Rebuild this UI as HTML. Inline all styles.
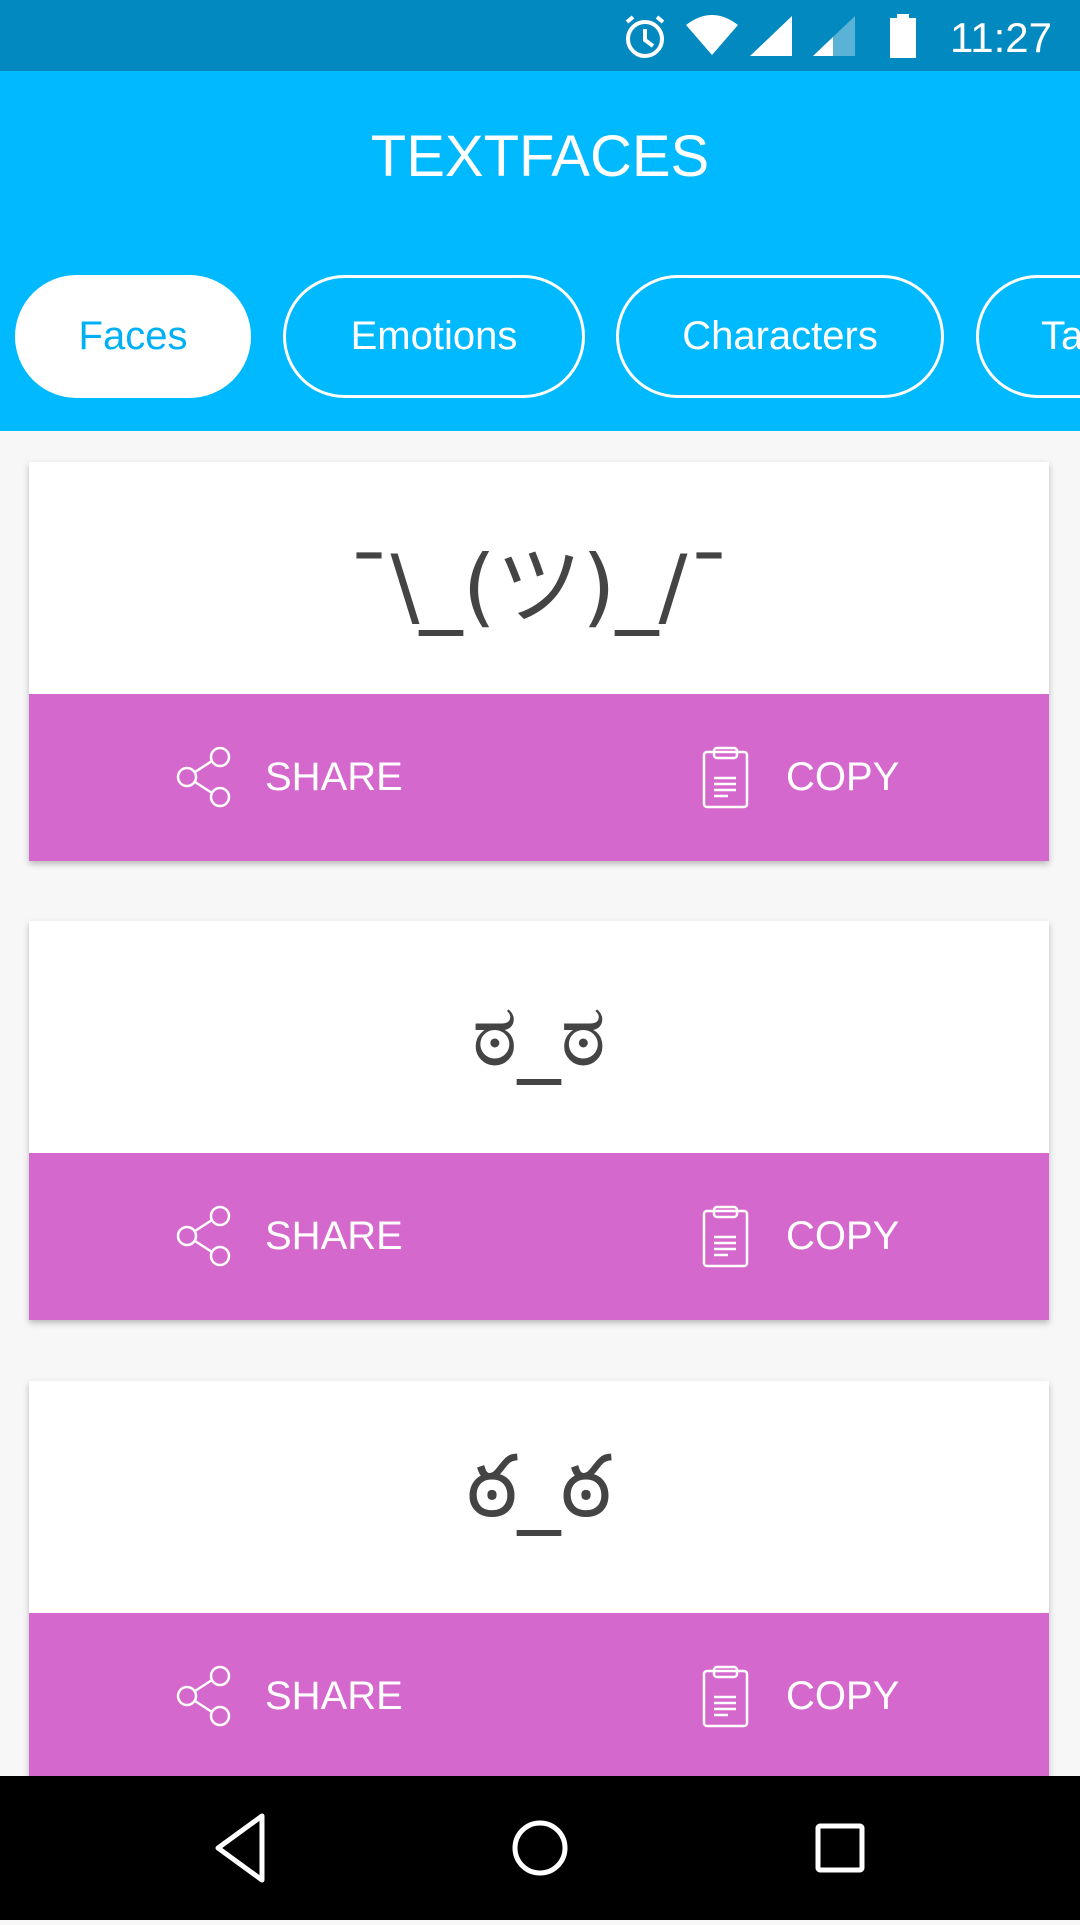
<!DOCTYPE html>
<html><head><meta charset="utf-8"><style>
*{margin:0;padding:0;box-sizing:border-box}
body{width:1080px;height:1920px;background:#f7f7f7;font-family:"Liberation Sans","Noto Sans CJK JP",sans-serif;position:relative;overflow:hidden}
.sb{position:absolute;top:0;left:0;width:1080px;height:71px;background:#0289c0}
.ab{position:absolute;top:71px;left:0;width:1080px;height:360px;background:#00b9ff}
.title{position:absolute;top:120px;width:1080px;text-align:center;color:#fff;font-size:58px;font-weight:300}
.pill{position:absolute;top:275px;height:123px;border:3px solid #fff;border-radius:62px;color:#fff;font-size:40px;display:flex;align-items:center;justify-content:center}
.card{position:absolute;left:29px;width:1020px;height:399px;background:#fff;box-shadow:0 3px 6px rgba(0,0,0,.25)}
.face{height:232px;display:flex;align-items:center;justify-content:center;font-size:86px;color:#444;font-family:"DejaVu Sans","Liberation Sans","Noto Sans CJK JP",sans-serif}
.bar{height:167px;background:#d568cc;position:relative;color:#fff;font-size:40px}
.bar svg{position:absolute;top:52px}
.bar span{position:absolute;top:0;line-height:167px}
.nav{position:absolute;top:1776px;left:0;width:1080px;height:144px;background:#000}
</style></head><body>
<div class="sb">
<svg width="1080" height="71" style="position:absolute;left:0;top:0">
<g fill="none" stroke="#fff" stroke-width="4"><circle cx="645" cy="39" r="17"/><path d="M645 29v11l8 6M627 22l6-5M663 22l-6-5"/></g>
<path d="M686 25 Q712 5 738 25 L712 55Z" fill="#fff"/>
<path d="M750 56 L792 16 L792 56Z" fill="#fff"/>
<path d="M813 56 L855 16 L855 56Z" fill="#fff" opacity=".35"/>
<path d="M813 56 L833 37 L833 56Z" fill="#fff"/>
<rect x="890" y="18" width="26" height="40" fill="#fff"/><rect x="897" y="14" width="12" height="5" fill="#fff"/>
<text x="950" y="52" fill="#fff" font-size="42" font-family="Liberation Sans">11:27</text>
</svg></div>
<div class="ab">
<div class="title" style="top:52px">TEXTFACES</div>
</div>
<div class="pill" style="left:15px;width:236px;background:#fff;color:#00b0f5">Faces</div>
<div class="pill" style="left:283px;width:302px">Emotions</div>
<div class="pill" style="left:616px;width:328px">Characters</div>
<div class="pill" style="left:976px;width:200px;justify-content:flex-start;padding-left:62px">Tags</div>

<div class="card" style="top:462px"><div class="face">¯\_(ツ)_/¯</div><div class="bar">
<svg style="left:146px" width="60" height="62" fill="none" stroke="#fff" stroke-width="2.5"><circle cx="12" cy="31" r="9"/><circle cx="45" cy="11" r="9"/><circle cx="45" cy="51" r="9"/><path d="M20 26L37 15M20 36L37 47"/></svg>
<span style="left:236px">SHARE</span>
<svg style="left:672px" width="50" height="64" fill="none" stroke="#fff" stroke-width="2.5"><rect x="3" y="6" width="43" height="55" rx="3"/><rect x="13" y="2" width="23" height="10" rx="3"/><path d="M13 32h22M13 38h22M13 44h22M13 50h14"/></svg>
<span style="left:757px">COPY</span></div></div>

<div class="card" style="top:921px"><div class="face">ಠ_ಠ</div><div class="bar">
<svg style="left:146px" width="60" height="62" fill="none" stroke="#fff" stroke-width="2.5"><circle cx="12" cy="31" r="9"/><circle cx="45" cy="11" r="9"/><circle cx="45" cy="51" r="9"/><path d="M20 26L37 15M20 36L37 47"/></svg>
<span style="left:236px">SHARE</span>
<svg style="left:672px" width="50" height="64" fill="none" stroke="#fff" stroke-width="2.5"><rect x="3" y="6" width="43" height="55" rx="3"/><rect x="13" y="2" width="23" height="10" rx="3"/><path d="M13 32h22M13 38h22M13 44h22M13 50h14"/></svg>
<span style="left:757px">COPY</span></div></div>

<div class="card" style="top:1381px"><div class="face">ఠ_ఠ</div><div class="bar">
<svg style="left:146px" width="60" height="62" fill="none" stroke="#fff" stroke-width="2.5"><circle cx="12" cy="31" r="9"/><circle cx="45" cy="11" r="9"/><circle cx="45" cy="51" r="9"/><path d="M20 26L37 15M20 36L37 47"/></svg>
<span style="left:236px">SHARE</span>
<svg style="left:672px" width="50" height="64" fill="none" stroke="#fff" stroke-width="2.5"><rect x="3" y="6" width="43" height="55" rx="3"/><rect x="13" y="2" width="23" height="10" rx="3"/><path d="M13 32h22M13 38h22M13 44h22M13 50h14"/></svg>
<span style="left:757px">COPY</span></div></div>

<div class="nav"><svg width="1080" height="144" fill="none" stroke="#fff" stroke-width="5">
<path d="M262 40 L218 72 L262 104Z" stroke-linejoin="round"/>
<circle cx="540" cy="72" r="25"/>
<rect x="818" y="50" width="44" height="44" rx="2"/>
</svg></div>
</body></html>
